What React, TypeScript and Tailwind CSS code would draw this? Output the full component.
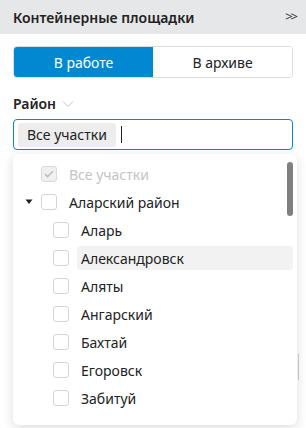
import React from "react";

const Check = ({ checked, disabled }: { checked?: boolean; disabled?: boolean }) => (
  <span
    className={
      "flex h-[16px] w-[16px] shrink-0 items-center justify-center rounded-[3px] border " +
      (disabled ? "border-[#d9d9d9] bg-[#f0f0f0]" : "border-[#d4d4d4] bg-white")
    }
  >
    {checked && (
      <svg width="10" height="8" viewBox="0 0 10 8">
        <path d="M1 4l2.6 2.6L9 1.2" fill="none" stroke="#bdbdbd" strokeWidth="1.6" />
      </svg>
    )}
  </span>
);

const children = ["Аларь", "Александровск", "Аляты", "Ангарский", "Бахтай", "Егоровск", "Забитуй"];

export default function App() {
  return (
    <div
      className="relative h-[428px] w-[306px] overflow-hidden bg-white text-[14px] text-[#222]"
      style={{ fontFamily: '"Noto Sans", "Open Sans", sans-serif' }}
    >
      <div className="flex h-[34px] items-center justify-between bg-[#e6e7e8] pl-[13px] pr-[10px]">
        <span className="font-semibold text-[14px] text-[#222]">Контейнерные площадки</span>
        <span className="text-[13px] tracking-[-2px] text-[#333]">&gt;&gt;</span>
      </div>
      <div className="px-[13px] pt-[12px]">
        <div className="flex h-[32px] overflow-hidden rounded-[4px] border border-[#dcdcdc]">
          <div className="flex flex-1 items-center justify-center bg-[#0288d1] text-white">В работе</div>
          <div className="flex flex-1 items-center justify-center bg-white text-[#222]">В архиве</div>
        </div>
        <div className="mt-[15px] flex items-center gap-[6px]">
          <span className="font-semibold">Район</span>
          <svg width="12" height="8" viewBox="0 0 12 8">
            <path d="M1 1.5l5 5 5-5" fill="none" stroke="#c8c8c8" strokeWidth="1" />
          </svg>
        </div>
        <div className="mt-[5px] flex h-[31px] items-center rounded-[4px] border border-[#0288d1] px-[4px]">
          <span className="flex h-[24px] items-center rounded-[3px] bg-[#ededed] px-[9px] text-[#222]">Все участки</span>
          <span className="ml-[5px] h-[17px] w-[1px] bg-[#222]" />
        </div>
      </div>
      <div className="absolute right-[7px] top-[354px] h-[26px] w-[1px] bg-[#d0d0d0]" />
      <div className="absolute left-[13px] top-[154px] h-[271px] w-[284px] rounded-[6px] bg-white shadow-[0_3px_12px_rgba(0,0,0,0.14)]">
        <div className="pt-[6px]">
          <div className="flex h-[28px] items-center pl-[28px]">
            <Check checked disabled />
            <span className="ml-[12px] text-[#c4c4c4]">Все участки</span>
          </div>
          <div className="flex h-[28px] items-center pl-[12px]">
            <svg width="8" height="6" viewBox="0 0 8 6" className="mr-[8px]">
              <path d="M0.5 0.5h7L4 5z" fill="#222" />
            </svg>
            <Check />
            <span className="ml-[12px]">Аларский район</span>
          </div>
          {children.map((c, i) => (
            <div key={c} className="flex h-[28px] items-center pl-[40px] pr-[4px]">
              <Check />
              <span
                className={
                  "ml-[8px] flex h-[24px] flex-1 items-center rounded-[4px] px-[4px] " +
                  (i === 1 ? "bg-[#f2f2f2]" : "")
                }
              >
                {c}
              </span>
            </div>
          ))}
        </div>
        <div className="absolute right-[4px] top-[8px] h-[54px] w-[6px] rounded-full bg-[#808080]" />
      </div>
    </div>
  );
}
